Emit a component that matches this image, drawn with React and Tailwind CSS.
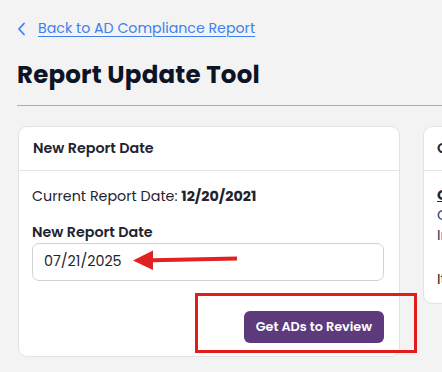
import React from "react";

const ChevronLeft = () => (
  <svg width="10" height="14" viewBox="0 0 10 14" fill="none" className="shrink-0">
    <path d="M7 1.5L2 7l5 5.5" stroke="#3b82f6" strokeWidth="1.8" strokeLinecap="round" strokeLinejoin="round" />
  </svg>
);

const RedArrow = () => (
  <svg width="106" height="22" viewBox="0 0 106 22" className="absolute left-[114px] top-[122px]">
    <path d="M20 9.2L104 7.6L104 11.4L20 13.2Z" fill="#e02222" />
    <path d="M0 11.5L20 1.5L20 21Z" fill="#e02222" />
  </svg>
);

export default function App() {
  return (
    <div className="min-h-screen bg-[#f3f3f3] font-['Poppins','Inter',sans-serif] text-[#1f2430] overflow-hidden">
      <div className="pl-[17px] pt-[20px]">
        <a href="#" className="flex items-center gap-[11px] h-[17px] text-[#3f7ff0] text-[14.2px] underline underline-offset-[3px] decoration-[1px] w-max">
          <ChevronLeft />
          <span>Back to AD Compliance Report</span>
        </a>
        <h1 className="mt-[23px] text-[24.5px] leading-[30px] font-bold text-[#0d1426] tracking-[0.2px]">Report Update Tool</h1>
        <div className="mt-[15px] h-px bg-[#a9afb8]" />
      </div>

      <div className="flex gap-[23px] pl-[18px] pt-[20px] items-start">
        <div className="relative w-[382px] shrink-0 bg-white border border-[#e3e3e3] rounded-[9px]">
          <div className="h-[44px] px-[14px] flex items-center border-b border-[#e3e3e3]">
            <span className="text-[14.3px] font-semibold text-[#1f2430]">New Report Date</span>
          </div>
          <div className="pl-[13px] pr-[15px] pt-[15px] pb-[13px]">
            <p className="text-[14.3px] leading-[20px]">
              Current Report Date: <span className="font-bold">12/20/2021</span>
            </p>
            <p className="mt-[16px] text-[14.3px] leading-[20px] font-semibold">New Report Date</p>
            <div className="mt-[1px] h-[38px] border border-[#cfd3d9] rounded-[7px] flex items-center px-[11px] text-[14.3px]">
              07/21/2025
            </div>
            <div className="flex justify-end mt-[30px]">
              <button className="h-[32px] px-[12px] rounded-[6px] bg-[#5c3a7b] text-white text-[12.8px] font-semibold">
                Get ADs to Review
              </button>
            </div>
          </div>
          <RedArrow />
          <div className="absolute left-[176px] top-[166px] w-[222px] h-[60px] border-[3px] border-[#e31b1b]" />
        </div>

        <div className="w-[300px] shrink-0 h-[178px] bg-white border border-[#e3e3e3] rounded-[9px]">
          <div className="h-[44px] px-[13px] flex items-center border-b border-[#e3e3e3]">
            <span className="text-[14.3px] font-semibold">Calculation Details</span>
          </div>
          <div className="px-[13px] pt-[14px] text-[14.3px] leading-[20px]">
            <p className="font-bold underline">Guidance</p>
            <p className="text-[#1d3b6e]">Checks each AD</p>
            <p className="text-[#1d3b6e]">Includes revisions</p>
            <p className="mt-[24px]">Items flagged</p>
          </div>
        </div>
      </div>
    </div>
  );
}
